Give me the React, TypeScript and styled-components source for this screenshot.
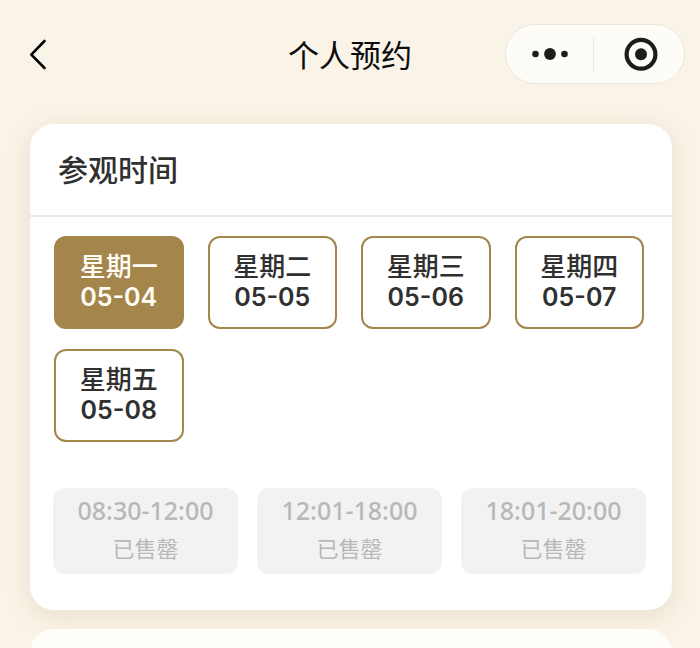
import React, { useState } from 'react';
import styled, { createGlobalStyle } from 'styled-components';

const GlobalStyle = createGlobalStyle`
  *, *::before, *::after { box-sizing: border-box; }
  body {
    margin: 0;
    background: #faf3e7;
    font-family: 'Noto Sans CJK SC', sans-serif;
    color: #303030;
  }
  button { font: inherit; color: inherit; cursor: pointer; }
  h1, h2 { margin: 0; }
`;

const Page = styled.div`
  height: 100vh;
  overflow: hidden;
`;

const NavBar = styled.header`
  display: grid;
  grid-template-columns: 1fr auto 1fr;
  align-items: center;
  height: 108px;
  padding: 0 15px;
`;

const BackButton = styled.button`
  justify-self: start;
  display: flex;
  padding: 0 13px;
  border: 0;
  background: none;
  color: #000;
`;

const Title = styled.h1`
  font-size: 31px;
  font-weight: 400;
  line-height: 40px;
  color: #0c0c0c;
`;

const Capsule = styled.div`
  justify-self: end;
  display: flex;
  align-items: center;
  width: 180px;
  height: 60px;
  border: 1px solid #ece7dc;
  border-radius: 30px;
  background: #fdfcf7;
`;

const CapsuleButton = styled.button`
  flex: 1;
  display: flex;
  align-items: center;
  justify-content: center;
  height: 100%;
  padding: 0;
  border: 0;
  background: none;
  color: #1d1c18;
`;

const CloseButton = styled(CapsuleButton)`
  padding-left: 3px;
`;

const Divider = styled.span`
  width: 1px;
  height: 35px;
  background: #eae8e2;
`;

const Content = styled.main`
  display: flex;
  flex-direction: column;
  gap: 19px;
  padding: 16px 28px 0 30px;
`;

const Card = styled.section`
  border-radius: 24px;
  background: #fff;
  box-shadow: 0 6px 28px rgba(120, 100, 55, 0.14);
`;

const NextCard = styled(Card)`
  min-height: 120px;
  background: #fffdf9;
  box-shadow: none;
`;

const CardHeader = styled.div`
  padding: 22px 28px 25px;
  border-bottom: 2px solid #e9e9e9;
`;

const CardTitle = styled.h2`
  font-size: 30px;
  font-weight: 500;
  line-height: 44px;
`;

const CardBody = styled.div`
  padding: 19px 26px 36px 23px;
`;

const DayGrid = styled.div`
  display: grid;
  grid-template-columns: repeat(4, 1fr);
  gap: 20px 24px;
  padding: 0 2px 0 1px;
`;

const DayButton = styled.button<{ $selected: boolean }>`
  display: flex;
  flex-direction: column;
  align-items: center;
  padding: 11px 0 14px;
  border: 2px solid #a4864c;
  border-radius: 12px;
  background: ${(p) => (p.$selected ? '#a4864c' : '#fff')};
  color: ${(p) => (p.$selected ? '#fffdf6' : '#303030')};
  font-weight: 500;
  line-height: 32px;
`;

const Weekday = styled.span`
  font-size: 26px;
`;

const DateText = styled.span`
  font-family: Inter, 'Noto Sans CJK SC', sans-serif;
  font-size: 25px;
  font-weight: 600;
`;

const SlotGrid = styled.div`
  display: grid;
  grid-template-columns: repeat(3, 1fr);
  gap: 19px;
  margin-top: 46px;
`;

const SlotButton = styled.button`
  display: flex;
  flex-direction: column;
  align-items: center;
  padding: 4px 0 8px;
  border: 0;
  border-radius: 12px;
  background: #f2f2f2;
  color: #b8b8b8;
  line-height: 37px;
  &:disabled { cursor: default; }
`;

const SlotTime = styled.span`
  font-family: 'Noto Sans', 'Noto Sans CJK SC', sans-serif;
  font-size: 25px;
  font-weight: 500;
`;

const SlotStatus = styled.span`
  font-size: 22px;
`;

const days = [
  { weekday: '星期一', date: '05-04' },
  { weekday: '星期二', date: '05-05' },
  { weekday: '星期三', date: '05-06' },
  { weekday: '星期四', date: '05-07' },
  { weekday: '星期五', date: '05-08' },
];

const slots = ['08:30-12:00', '12:01-18:00', '18:01-20:00'];

export default function App() {
  const [selected, setSelected] = useState('05-04');

  return (
    <Page>
      <GlobalStyle />
      <NavBar>
        <BackButton type="button" aria-label="返回">
          <svg width="20" height="32" viewBox="0 0 20 32" fill="none" stroke="currentColor" strokeWidth="2.6" strokeLinecap="round" strokeLinejoin="round">
            <path d="M16.5 3 3.3 16.6 16.5 30" />
          </svg>
        </BackButton>
        <Title>个人预约</Title>
        <Capsule>
          <CapsuleButton type="button" aria-label="更多">
            <svg width="38" height="14" viewBox="0 0 38 14" fill="currentColor">
              <circle cx="4.5" cy="7" r="3.3" />
              <circle cx="19" cy="7" r="5.9" />
              <circle cx="33.5" cy="7" r="3.3" />
            </svg>
          </CapsuleButton>
          <Divider />
          <CloseButton type="button" aria-label="关闭">
            <svg width="34" height="34" viewBox="0 0 34 34">
              <circle cx="17" cy="17.3" r="14.4" fill="none" stroke="currentColor" strokeWidth="4.2" />
              <circle cx="17" cy="17.3" r="6" fill="currentColor" />
            </svg>
          </CloseButton>
        </Capsule>
      </NavBar>
      <Content>
        <Card>
          <CardHeader>
            <CardTitle>参观时间</CardTitle>
          </CardHeader>
          <CardBody>
            <DayGrid>
              {days.map((day) => (
                <DayButton
                  key={day.date}
                  type="button"
                  $selected={day.date === selected}
                  aria-pressed={day.date === selected}
                  onClick={() => setSelected(day.date)}
                >
                  <Weekday>{day.weekday}</Weekday>
                  <DateText>{day.date}</DateText>
                </DayButton>
              ))}
            </DayGrid>
            <SlotGrid>
              {slots.map((time) => (
                <SlotButton key={time} type="button" disabled>
                  <SlotTime>{time}</SlotTime>
                  <SlotStatus>已售罄</SlotStatus>
                </SlotButton>
              ))}
            </SlotGrid>
          </CardBody>
        </Card>
        <NextCard />
      </Content>
    </Page>
  );
}
